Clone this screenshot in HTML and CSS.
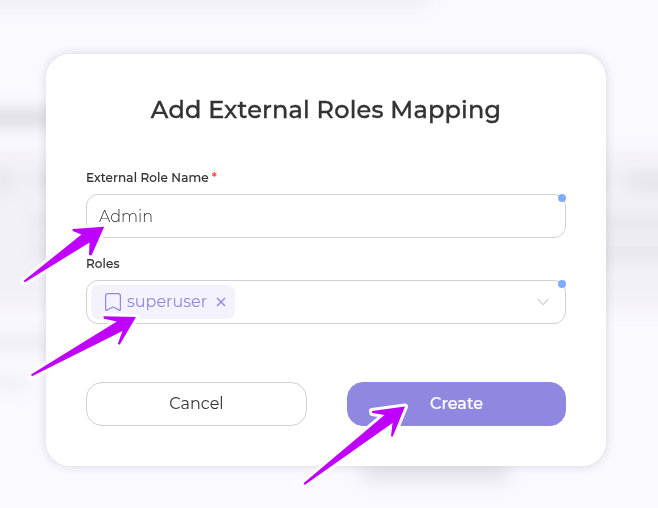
FILE: index.html
```html
<!DOCTYPE html>
<html lang="en">
<head>
<meta charset="utf-8">
<title>Add External Roles Mapping</title>
<link rel="stylesheet" href="styles.css">
</head>
<body>
<svg class="backdrop" viewBox="0 0 658 508" aria-hidden="true">
  <defs>
    <filter id="soft" x="-100" y="-50" width="860" height="620" filterUnits="userSpaceOnUse" color-interpolation-filters="sRGB"><feGaussianBlur stdDeviation="10"/></filter>
    <filter id="tight" x="-100" y="-50" width="860" height="620" filterUnits="userSpaceOnUse" color-interpolation-filters="sRGB"><feGaussianBlur stdDeviation="9"/></filter>
  </defs>
  <rect x="-40" y="152" width="740" height="158" fill="#f2f1f7" filter="url(#soft)"/>
  <g fill="#55555c" filter="url(#tight)">
    <rect x="-20" y="-8" width="450" height="11" opacity=".11"/>
    <rect x="-20" y="112" width="110" height="12" opacity=".26"/>
    <rect x="-20" y="168" width="34" height="24" opacity=".06"/>
    <rect x="38" y="174" width="40" height="12" opacity=".14"/>
    <rect x="32" y="217" width="40" height="10" opacity=".1"/>
    <rect x="32" y="245" width="40" height="10" opacity=".1"/>
    <rect x="-20" y="338" width="80" height="9" opacity=".14"/>
    <rect x="-20" y="379" width="50" height="8" opacity=".1"/>
    <rect x="570" y="176" width="34" height="11" opacity=".1"/>
    <rect x="626" y="176" width="60" height="11" opacity=".13"/>
    <rect x="590" y="219" width="100" height="9" opacity=".11"/>
    <rect x="590" y="248" width="100" height="9" opacity=".11"/>
    <rect x="361" y="465" width="148" height="15" opacity=".16"/>
  </g>
</svg>
<main class="modal">
  <h1 class="title">Add External Roles Mapping</h1>
  <form class="form">
    <div class="field">
      <div class="label"><span>External Role Name</span><span class="required">*</span></div>
      <div class="control"><span class="value">Admin</span><i class="dot"></i></div>
    </div>
    <div class="field">
      <div class="label"><span>Roles</span></div>
      <div class="control select">
        <div class="tag">
          <svg class="bookmark" viewBox="0 0 16 18"><path d="M.6 2.9Q.6.6 2.9.6h10.2q2.3 0 2.3 2.3v13.3q0 1.6-1.3.9L8.7 14.3q-.7-.4-1.4 0L1.9 17.1q-1.3.7-1.3-.9Z"/></svg>
          <span class="tag-name">superuser</span>
          <svg class="close" viewBox="0 0 10 10"><path d="M1 1l8 8M9 1L1 9"/></svg>
        </div>
        <svg class="chevron" viewBox="0 0 12 8"><path d="M.7.9L6 6.6 11.3.9"/></svg>
        <i class="dot"></i>
      </div>
    </div>
    <div class="actions">
      <button type="button" class="button cancel">Cancel</button>
      <button type="button" class="button create">Create</button>
    </div>
  </form>
</main>
<svg class="arrows" viewBox="0 0 658 508" aria-hidden="true">
  <path d="M72.6 229L104.2 226.8 91.5 255.5 89 255 89.5 242.5 25 282.3 23.5 281 81.5 234.5 72.7 231Z"/>
  <path d="M103.3 316.2L136 317 119.7 344.7 117.8 343.7 122.5 331 32 376.3 31 374.5 116.8 321.5 104 318.7Z"/>
  <path d="M372 411L405 406.5 392.7 436.7 391 436.3 392.5 423 304.7 485 303.5 483.3 384.5 415 372.3 413Z"/>
</svg>
</body>
</html>
```

FILE: styles.css
```css
* { box-sizing: border-box; }

body {
  margin: 0;
  width: 658px;
  height: 508px;
  overflow: hidden;
  position: relative;
  background: #faf9ff;
  color: #333;
  font-family: Montserrat, Inter, sans-serif;
}

.backdrop, .arrows {
  position: absolute;
  inset: 0;
  width: 658px;
  height: 508px;
}

.arrows { pointer-events: none; z-index: 2; }
.arrows path {
  fill: #bf00ff;
  stroke: #fff;
  stroke-width: 6;
  stroke-linejoin: round;
  paint-order: stroke;
}

.modal {
  position: relative;
  width: 560px;
  height: 412px;
  margin: 54px 0 0 46px;
  padding: 40px;
  border-radius: 24px;
  background: #fff;
  box-shadow: 0 0 10px rgba(40, 35, 60, .17);
}

.title {
  margin: 0;
  text-align: center;
  white-space: nowrap;
  font-size: 24px;
  line-height: 32px;
  font-weight: 500;
  letter-spacing: .19px;
  -webkit-text-stroke: .35px #333;
}

.form { margin-top: 44px; }
.field { height: 86px; }

.label {
  display: flex;
  height: 24px;
  line-height: 16px;
  font-size: 12px;
  font-weight: 500;
  letter-spacing: .12px;
  -webkit-text-stroke: .15px #333;
  white-space: nowrap;
}
.required { margin-left: 3px; color: #f5453d; font-weight: 600; -webkit-text-stroke: 0; }

.control {
  position: relative;
  display: flex;
  align-items: center;
  height: 44px;
  padding: 0 12px;
  border: 1px solid #d0d0da;
  border-radius: 12px;
  background: #fff;
}
.value { font-size: 16px; font-weight: 300; will-change: transform; }
.select { padding: 0 16px 0 4px; justify-content: space-between; }

.dot {
  position: absolute;
  top: -1px;
  right: -1px;
  width: 8px;
  height: 8px;
  border-radius: 50%;
  background: #80acff;
}

.tag {
  display: flex;
  align-items: center;
  width: 144px;
  height: 34px;
  padding-left: 14px;
  border-radius: 8px;
  background: #f4f2fc;
  color: #9187e1;
}
.bookmark, .close, .chevron { fill: none; stroke: currentColor; flex: none; }
.bookmark { width: 16px; height: 18px; stroke-width: 1.2; }
.tag-name { width: 84px; margin-left: 6px; font-size: 16px; line-height: 20px; padding-bottom: 1px; }
.close { width: 10px; height: 10px; margin-left: 5px; stroke-width: 1.4; }
.chevron { width: 12px; height: 8px; color: #cbcbd3; stroke-width: 1.2; }

.actions {
  display: grid;
  grid-template-columns: 221px 219px;
  gap: 40px;
  margin-top: 40px;
}
.button {
  height: 44px;
  padding: 0;
  border: 1px solid #d0d0da;
  border-radius: 16px;
  background: #fff;
  color: #333;
  font: 400 16px/20px Montserrat, Inter, sans-serif;
}
.create { border-color: #9087e1; background: #9087e1; color: #fff; font-weight: 500; -webkit-text-stroke: .2px #fff; }
```
